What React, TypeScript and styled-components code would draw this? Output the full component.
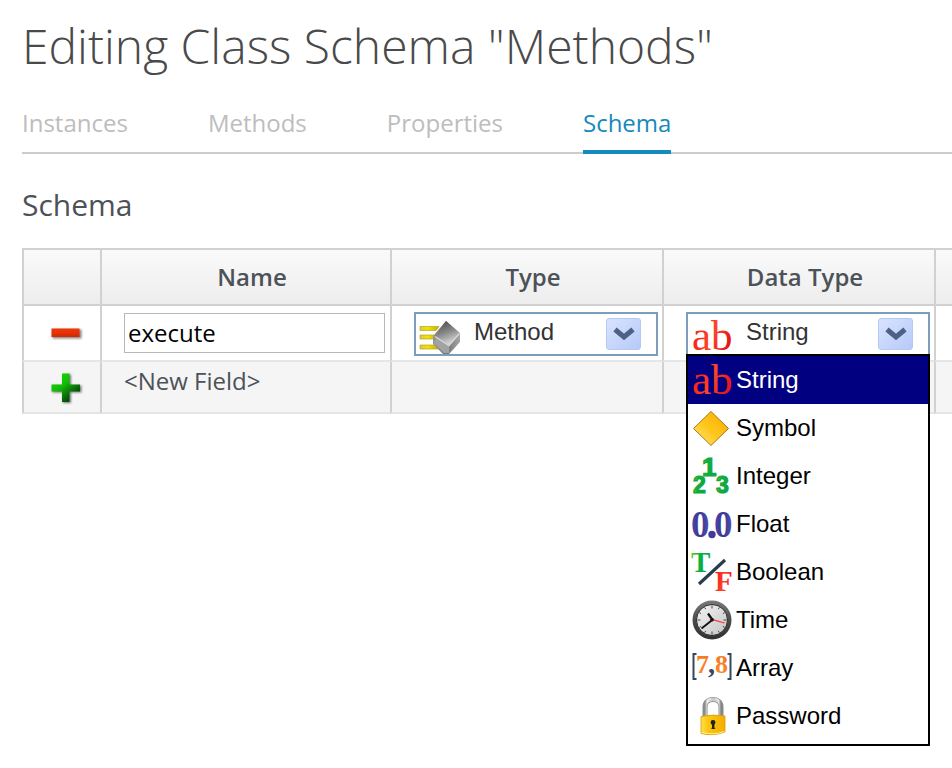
import React, { useState } from "react";
import styled, { createGlobalStyle } from "styled-components";

const GlobalStyle = createGlobalStyle`
  *, *::before, *::after { box-sizing: border-box; }
  body {
    margin: 0;
    background: #fff;
    color: #4d5258;
    font-family: "Open Sans", sans-serif;
    font-size: 24px;
  }
`;

const Page = styled.main`
  min-height: 100vh;
  padding: 14px 0 22px 22px;
`;

const Title = styled.h1`
  margin: 0;
  color: #4a4a4a;
  font-size: 48px;
  font-weight: 300;
  line-height: 64px;
`;

const Tabs = styled.nav`
  display: flex;
  gap: 80px;
  margin-top: 28px;
  border-bottom: 2px solid #ccc;
`;

const Tab = styled.a<{ $active?: boolean }>`
  margin-bottom: -2px;
  padding-bottom: 10px;
  border-bottom: 4px solid ${(p) => (p.$active ? "#1689bd" : "transparent")};
  color: ${(p) => (p.$active ? "#1689bd" : "#bdbdbd")};
  line-height: 34px;
  text-decoration: none;
`;

const SectionTitle = styled.h2`
  margin: 30px 0 22px;
  font-size: 30px;
  font-weight: 400;
  line-height: 42px;
`;

const Table = styled.table`
  width: 100%;
  table-layout: fixed;
  border-spacing: 0;
`;

const Col = styled.col<{ $width?: number }>`
  width: ${(p) => (p.$width ? `${p.$width}px` : "auto")};
`;

const HeadCell = styled.th`
  height: 58px;
  padding: 0 10px 0 22px;
  border: 2px solid #d1d1d1;
  border-right: 0;
  background: linear-gradient(#fafafa, #ededed) padding-box;
  font-weight: 600;
  line-height: 34px;
`;

const Row = styled.tr<{ $shaded?: boolean }>`
  background: ${(p) => (p.$shaded ? "#f5f5f5" : "#fff")};
`;

const Cell = styled.td`
  padding: 6px 4px 4px 22px;
  border-left: 2px solid #d1d1d1;
  border-bottom: 2px solid #e6e6e6;
  vertical-align: top;
`;

const LabelCell = styled(Cell)`
  height: 52px;
  padding-top: 3px;
  line-height: 32px;
`;

const ActionCell = styled(Cell)`
  padding: 0 0 0 8px;
  text-align: center;
  vertical-align: middle;
`;

const IconButton = styled.button`
  display: inline-flex;
  padding: 0;
  border: 0;
  background: none;
  vertical-align: middle;
  cursor: pointer;
`;

const NameInput = styled.input`
  display: block;
  width: calc(100% - 1px);
  height: 40px;
  margin-top: 1px;
  padding: 0 3px 2px;
  border: 1px solid #b8b8b8;
  border-radius: 0;
  outline: 0;
  background: #fff;
  color: #000;
  font: 24px "Open Sans", sans-serif;
`;

const Combo = styled.div`
  position: relative;
  display: flex;
  height: 44px;
  padding-left: 4px;
  padding-right: 15px;
  border: 2px solid #7b9ebd;
  background: #fff;
`;

const ComboIcon = styled.span`
  flex: none;
  width: 40px;
  height: 38px;
  margin-top: 2px;
`;

const ComboSelect = styled.select`
  flex: 1;
  min-width: 0;
  margin: 0;
  padding: 0 0 6px 14px;
  border: 0;
  outline: 0;
  appearance: none;
  background: none;
  color: #333;
  font: 24px "Liberation Sans", Arial, sans-serif;
`;

const ComboArrow = styled.button`
  display: flex;
  flex: none;
  align-items: center;
  justify-content: center;
  width: 35px;
  height: 32px;
  margin-top: 4px;
  padding: 0;
  border: 1px solid #b5c8f3;
  border-radius: 3px;
  background: linear-gradient(135deg, #d8e3ff, #b6caf8);
  cursor: pointer;
`;

const Menu = styled.ul`
  position: absolute;
  z-index: 1;
  top: 100%;
  left: -2px;
  right: -2px;
  margin: 0;
  padding: 0 0 4px;
  border: 2px solid #000;
  background: #fff;
  list-style: none;
`;

const MenuItem = styled.li<{ $selected: boolean }>`
  display: flex;
  align-items: center;
  gap: 4px;
  height: 48px;
  padding: 0 4px;
  background: ${(p) => (p.$selected ? "#000080" : "#fff")};
  color: ${(p) => (p.$selected ? "#fff" : "#000")};
  font-family: "Liberation Sans", Arial, sans-serif;
  cursor: pointer;
`;

const Glyph = styled.svg`
  display: block;
  flex: none;
  overflow: visible;
`;

const SerifText = styled.text`
  font-family: "Liberation Serif", "Times New Roman", serif;
`;

const SansText = styled.text`
  font-family: "Liberation Sans", Arial, sans-serif;
  font-weight: 700;
`;

const Icon = ({ children }: { children: React.ReactNode }) => (
  <Glyph width="40" height="40" viewBox="0 0 40 40" aria-hidden="true">
    {children}
  </Glyph>
);

const Gradients = () => (
  <Glyph width="0" height="0" aria-hidden="true">
    <defs>
      <linearGradient id="red" x1="0" y1="0" x2="1" y2="0.4">
        <stop offset="0" stopColor="#f00c0c" />
        <stop offset="0.6" stopColor="#ff4428" />
        <stop offset="1" stopColor="#e81818" />
      </linearGradient>
      <linearGradient id="gold" x1="0" y1="1" x2="1" y2="0">
        <stop offset="0" stopColor="#ffe680" />
        <stop offset="0.45" stopColor="#ffc81e" />
        <stop offset="1" stopColor="#f9a800" />
      </linearGradient>
      <linearGradient id="green" x1="0" y1="0" x2="1" y2="0.2">
        <stop offset="0" stopColor="#7ad91c" />
        <stop offset="0.45" stopColor="#10b040" />
        <stop offset="1" stopColor="#0aa84c" />
      </linearGradient>
      <linearGradient id="indigo">
        <stop offset="0" stopColor="#4a48a8" />
        <stop offset="0.5" stopColor="#3a3692" />
        <stop offset="1" stopColor="#5350ac" />
      </linearGradient>
      <linearGradient id="orange" x1="0" y1="0" x2="0" y2="1">
        <stop offset="0" stopColor="#f0781e" />
        <stop offset="1" stopColor="#ff8a30" />
      </linearGradient>
      <linearGradient id="rim" x1="0" y1="0" x2="0" y2="1">
        <stop offset="0" stopColor="#7a7a7a" />
        <stop offset="0.5" stopColor="#4c4c4c" />
        <stop offset="1" stopColor="#303030" />
      </linearGradient>
      <linearGradient id="face" x1="0" y1="0" x2="1" y2="1">
        <stop offset="0" stopColor="#f4f4f4" />
        <stop offset="1" stopColor="#c4c4c4" />
      </linearGradient>
      <linearGradient id="brass">
        <stop offset="0" stopColor="#ffdf50" />
        <stop offset="0.3" stopColor="#fcc60c" />
        <stop offset="1" stopColor="#f5ae00" />
      </linearGradient>
      <linearGradient id="steel">
        <stop offset="0" stopColor="#8d8d8d" />
        <stop offset="0.14" stopColor="#f2f2f2" />
        <stop offset="0.5" stopColor="#c4c4c4" />
        <stop offset="0.85" stopColor="#e6e6e6" />
        <stop offset="1" stopColor="#858585" />
      </linearGradient>
      <linearGradient id="minus" x1="0" y1="0" x2="0" y2="1">
        <stop offset="0" stopColor="#e23c12" />
        <stop offset="0.4" stopColor="#f03000" />
        <stop offset="1" stopColor="#c82c08" />
      </linearGradient>
      <linearGradient id="plus" x1="0.1" y1="0" x2="0.9" y2="1">
        <stop offset="0" stopColor="#14e000" />
        <stop offset="0.4" stopColor="#12bc08" />
        <stop offset="0.75" stopColor="#075a08" />
        <stop offset="1" stopColor="#043004" />
      </linearGradient>
      <linearGradient id="gemTop" x1="0.2" y1="0" x2="0.6" y2="1">
        <stop offset="0" stopColor="#484848" />
        <stop offset="0.5" stopColor="#8a8a8a" />
        <stop offset="1" stopColor="#dedede" />
      </linearGradient>
      <linearGradient id="gemSide" x1="0" y1="0" x2="1" y2="0">
        <stop offset="0" stopColor="#989898" />
        <stop offset="0.5" stopColor="#747474" />
        <stop offset="1" stopColor="#a6a6a6" />
      </linearGradient>
      <linearGradient id="streak">
        <stop offset="0" stopColor="#d9c840" />
        <stop offset="0.4" stopColor="#f0e400" />
        <stop offset="1" stopColor="#c8ac00" />
      </linearGradient>
      <filter id="soft" x="-20%" y="-20%" width="150%" height="150%">
        <feGaussianBlur stdDeviation="1" />
      </filter>
    </defs>
  </Glyph>
);

const StringIcon = () => (
  <Icon>
    <SerifText x="0" y="34" fontSize="43" fill="url(#red)">ab</SerifText>
  </Icon>
);

const SymbolIcon = () => (
  <Icon>
    <path d="M19 3.500 36.500 20.500 19 37.500 1.500 20.500Z" fill="url(#gold)" stroke="#a87a10" strokeWidth="1" />
  </Icon>
);

const IntegerIcon = () => (
  <Icon>
    <g fill="url(#green)" stroke="#12a83c" strokeWidth="1.200">
      <SansText x="10" y="20" fontSize="26">1</SansText>
      <SansText x="1" y="37" fontSize="23">2</SansText>
      <SansText x="24" y="37" fontSize="23">3</SansText>
    </g>
  </Icon>
);

const FloatIcon = () => (
  <Icon>
    <g fill="url(#indigo)" fontSize="37" fontWeight="700">
      <SerifText x="-1" y="33">0</SerifText>
      <SerifText x="22" y="33">0</SerifText>
    </g>
    <circle cx="20" cy="30.500" r="3.700" fill="#3f3b9a" />
  </Icon>
);

const BooleanIcon = () => (
  <Icon>
    <g fontSize="29" fontWeight="700">
      <SerifText x="-1" y="20" fill="url(#green)">T</SerifText>
      <SerifText x="23" y="39" fill="url(#red)">F</SerifText>
    </g>
    <path d="M7 32 33 8" stroke="#2b3d4d" strokeWidth="3.200" />
  </Icon>
);

const TimeIcon = () => (
  <Icon>
    <circle cx="20" cy="20" r="19.500" fill="url(#rim)" />
    <circle cx="20" cy="20" r="15.500" fill="url(#face)" stroke="#2c2c2c" strokeWidth="1" />
    <path
      d="M20 5.500v3M20 31.500v3M5.500 20h3M31.500 20h3M12.700 7.400l1 1.700M27.300 7.400l-1 1.700M7.400 12.700l1.700 1M32.600 12.700l-1.700 1M7.400 27.300l1.700-1M32.600 27.300l-1.700-1M12.700 32.600l1-1.700M27.300 32.600l-1-1.700"
      stroke="#444"
      strokeWidth="1"
    />
    <path d="M20.500 20 16 13.500" stroke="#111" strokeWidth="2.200" />
    <path d="M21.500 19 9.500 28.500" stroke="#111" strokeWidth="1.800" />
    <path d="M18 18.800 32.500 23" stroke="#f33" strokeWidth="1.200" />
    <circle cx="20" cy="19.800" r="1.800" fill="#111" />
  </Icon>
);

const ArrayIcon = () => (
  <Icon>
    <path
      d="M4.500 6H1.500V31H4.500M35.500 6H38.500V31H35.500"
      fill="none"
      stroke="#34495e"
      strokeWidth="2"
    />
    <g fill="url(#orange)" fontSize="26" fontWeight="700">
      <SerifText x="4" y="25">7</SerifText>
      <SerifText x="23" y="25">8</SerifText>
    </g>
    <SerifText x="16" y="25" fill="#34495e" fontSize="28" fontWeight="700">,</SerifText>
  </Icon>
);

const PasswordIcon = () => (
  <Icon>
    <path d="M13 22V10.500C13 1 29 1 29 10.500V22" fill="none" stroke="#8b8b8b" strokeWidth="5" />
    <path d="M13 22V10.500C13 1 29 1 29 10.500V22" fill="none" stroke="url(#steel)" strokeWidth="3.600" />
    <path d="M9 20.500Q21 18 33 20V36Q21 40.500 9 37.500Z" fill="url(#brass)" stroke="#d99a00" strokeWidth="0.800" />
    <path d="M9.500 36.500Q21 39.500 32.500 35.500" fill="none" stroke="#fff0a0" strokeWidth="1" />
    <circle cx="21" cy="26.500" r="2.400" fill="#222" />
    <path d="M20 26h2.400v5.500l1 1.500h-4.200l.8-1.500Z" fill="#222" />
  </Icon>
);

const MethodIcon = () => (
  <Icon>
    <g fill="url(#streak)" stroke="#b09a10" strokeWidth="0.600">
      <path d="M0 10.500h19l-3 4H0ZM0 19h14l2 4H0ZM0 29h18v4H0Z" />
    </g>
    <path d="M13 20 26 5 40 18V26L29 38H23L13 28Z" fill="url(#gemSide)" />
    <path d="M26 5 40 17 29 29 15 20Z" fill="url(#gemTop)" />
    <path d="M17 21 29 30V37H24L14 27Z" fill="#a2a2a2" />
    <path d="M15 20.500 29 29.500 39 18" fill="none" stroke="#d8d8d8" strokeWidth="1.400" />
  </Icon>
);

const MinusIcon = () => (
  <Icon>
    <rect x="6.500" y="16.500" width="29" height="9" fill="#333" opacity="0.600" filter="url(#soft)" />
    <rect x="5.500" y="15.500" width="28" height="8.500" fill="url(#minus)" />
  </Icon>
);

const PlusIcon = () => (
  <Icon>
    <path d="M17 7.500h8v11h10.500v7H25v10.500h-8V25.500H6.500v-7H17Z" fill="#222" opacity="0.600" filter="url(#soft)" />
    <path d="M16 6.500h7.500v11H34v7H23.500V35H16V24.500H5.500v-7H16Z" fill="url(#plus)" />
  </Icon>
);

const ChevronIcon = () => (
  <Glyph width="22" height="14" viewBox="0 0 22 14" aria-hidden="true">
    <path d="M2 2.500 11 10 20 2.500" fill="none" stroke="#4d6185" strokeWidth="5" />
  </Glyph>
);

const DATA_TYPES = [
  { name: "String", Icon: StringIcon },
  { name: "Symbol", Icon: SymbolIcon },
  { name: "Integer", Icon: IntegerIcon },
  { name: "Float", Icon: FloatIcon },
  { name: "Boolean", Icon: BooleanIcon },
  { name: "Time", Icon: TimeIcon },
  { name: "Array", Icon: ArrayIcon },
  { name: "Password", Icon: PasswordIcon },
];

const TABS = ["Instances", "Methods", "Properties", "Schema"];

const TypeCombo = () => (
  <Combo>
    <ComboIcon>
      <MethodIcon />
    </ComboIcon>
    <ComboSelect aria-label="Type" defaultValue="Method">
      <option>Method</option>
    </ComboSelect>
    <ComboArrow type="button" aria-label="Show types">
      <ChevronIcon />
    </ComboArrow>
  </Combo>
);

const DataTypeCombo = () => {
  const [selected, setSelected] = useState("String");
  const [open, setOpen] = useState(true);
  const current = DATA_TYPES.find((t) => t.name === selected) ?? DATA_TYPES[0];

  return (
    <Combo>
      <ComboIcon>
        <current.Icon />
      </ComboIcon>
      <ComboSelect aria-label="Data Type" value={selected} onChange={(e) => setSelected(e.target.value)}>
        {DATA_TYPES.map((t) => (
          <option key={t.name}>{t.name}</option>
        ))}
      </ComboSelect>
      <ComboArrow type="button" aria-label="Show data types" aria-expanded={open} onClick={() => setOpen(!open)}>
        <ChevronIcon />
      </ComboArrow>
      {open && (
        <Menu role="listbox" aria-label="Data types">
          {DATA_TYPES.map((t) => (
            <MenuItem
              key={t.name}
              role="option"
              aria-selected={t.name === selected}
              $selected={t.name === selected}
              onClick={() => {
                setSelected(t.name);
                setOpen(false);
              }}
            >
              <t.Icon />
              {t.name}
            </MenuItem>
          ))}
        </Menu>
      )}
    </Combo>
  );
};

export default function App() {
  const [name, setName] = useState("execute");

  return (
    <>
      <GlobalStyle />
      <Page>
        <Gradients />
        <Title>Editing Class Schema "Methods"</Title>
        <Tabs>
          {TABS.map((tab) => (
            <Tab key={tab} href={`#${tab.toLowerCase()}`} $active={tab === "Schema"}>
              {tab}
            </Tab>
          ))}
        </Tabs>
        <SectionTitle>Schema</SectionTitle>
        <Table>
          <colgroup>
            <Col $width={78} />
            <Col $width={290} />
            <Col $width={272} />
            <Col $width={272} />
            <Col />
          </colgroup>
          <thead>
            <tr>
              <HeadCell />
              <HeadCell>Name</HeadCell>
              <HeadCell>Type</HeadCell>
              <HeadCell>Data Type</HeadCell>
              <HeadCell />
            </tr>
          </thead>
          <tbody>
            <Row>
              <ActionCell>
                <IconButton type="button" aria-label="Remove field">
                  <MinusIcon />
                </IconButton>
              </ActionCell>
              <Cell>
                <NameInput aria-label="Name" value={name} onChange={(e) => setName(e.target.value)} />
              </Cell>
              <Cell>
                <TypeCombo />
              </Cell>
              <Cell>
                <DataTypeCombo />
              </Cell>
              <Cell />
            </Row>
            <Row $shaded>
              <ActionCell>
                <IconButton type="button" aria-label="Add field">
                  <PlusIcon />
                </IconButton>
              </ActionCell>
              <LabelCell>&lt;New Field&gt;</LabelCell>
              <Cell />
              <Cell />
              <Cell />
            </Row>
          </tbody>
        </Table>
      </Page>
    </>
  );
}
